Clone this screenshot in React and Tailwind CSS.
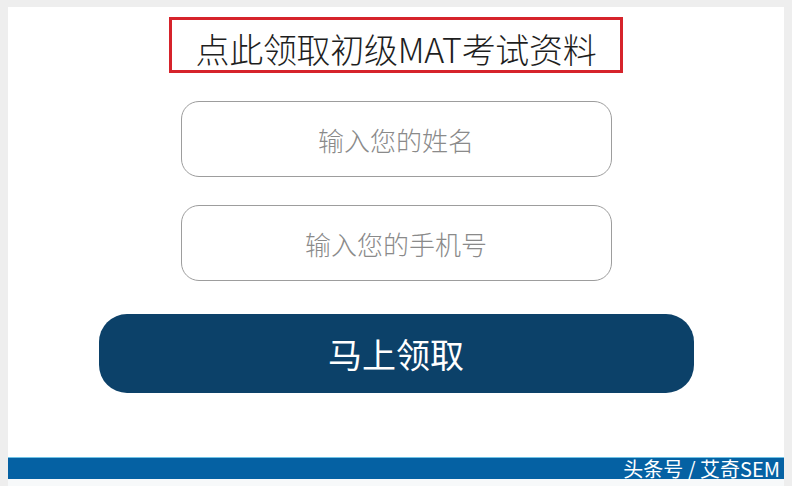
export default function App() {
  const cjk = { fontFamily: '"Noto Sans CJK SC", "Noto Sans", sans-serif' };

  return (
    <div className="w-[792px] h-[486px] bg-[#eeeeee] pt-[7px] px-[8px] overflow-hidden" style={cjk}>
      <div className="h-[472px] bg-white flex flex-col items-center">
        <div className="mt-[10px] w-[454px] h-[56px] border-[3px] border-[#d6232b] flex items-center justify-center">
          <span className="text-[34px] font-light leading-none text-[#1e1e1e] tracking-[-0.3px] mt-[8px]">点此领取初级MAT考试资料</span>
        </div>

        <div className="mt-[28px] w-[431px] h-[76px] rounded-[18px] border-[1.5px] border-[#9d9d9d] flex items-center justify-center">
          <span className="text-[26px] font-light text-[#8a8a8a]">输入您的姓名</span>
        </div>

        <div className="mt-[28px] w-[431px] h-[76px] rounded-[18px] border-[1.5px] border-[#9d9d9d] flex items-center justify-center">
          <span className="text-[26px] font-light text-[#8a8a8a]">输入您的手机号</span>
        </div>

        <button className="mt-[33px] w-[595px] h-[79px] rounded-[28px] bg-[#0c4169] flex items-center justify-center">
          <span className="text-[34px] text-white">马上领取</span>
        </button>

        <div className="mt-auto w-full h-[22px] bg-[#0561a3] border-t border-[#6fc3e6] flex items-center justify-end pr-[4px]">
          <span className="text-[20px] leading-none text-white">头条号 / 艾奇SEM</span>
        </div>
      </div>
      <div className="h-[7px] bg-[#f7f9fa]" />
    </div>
  );
}
